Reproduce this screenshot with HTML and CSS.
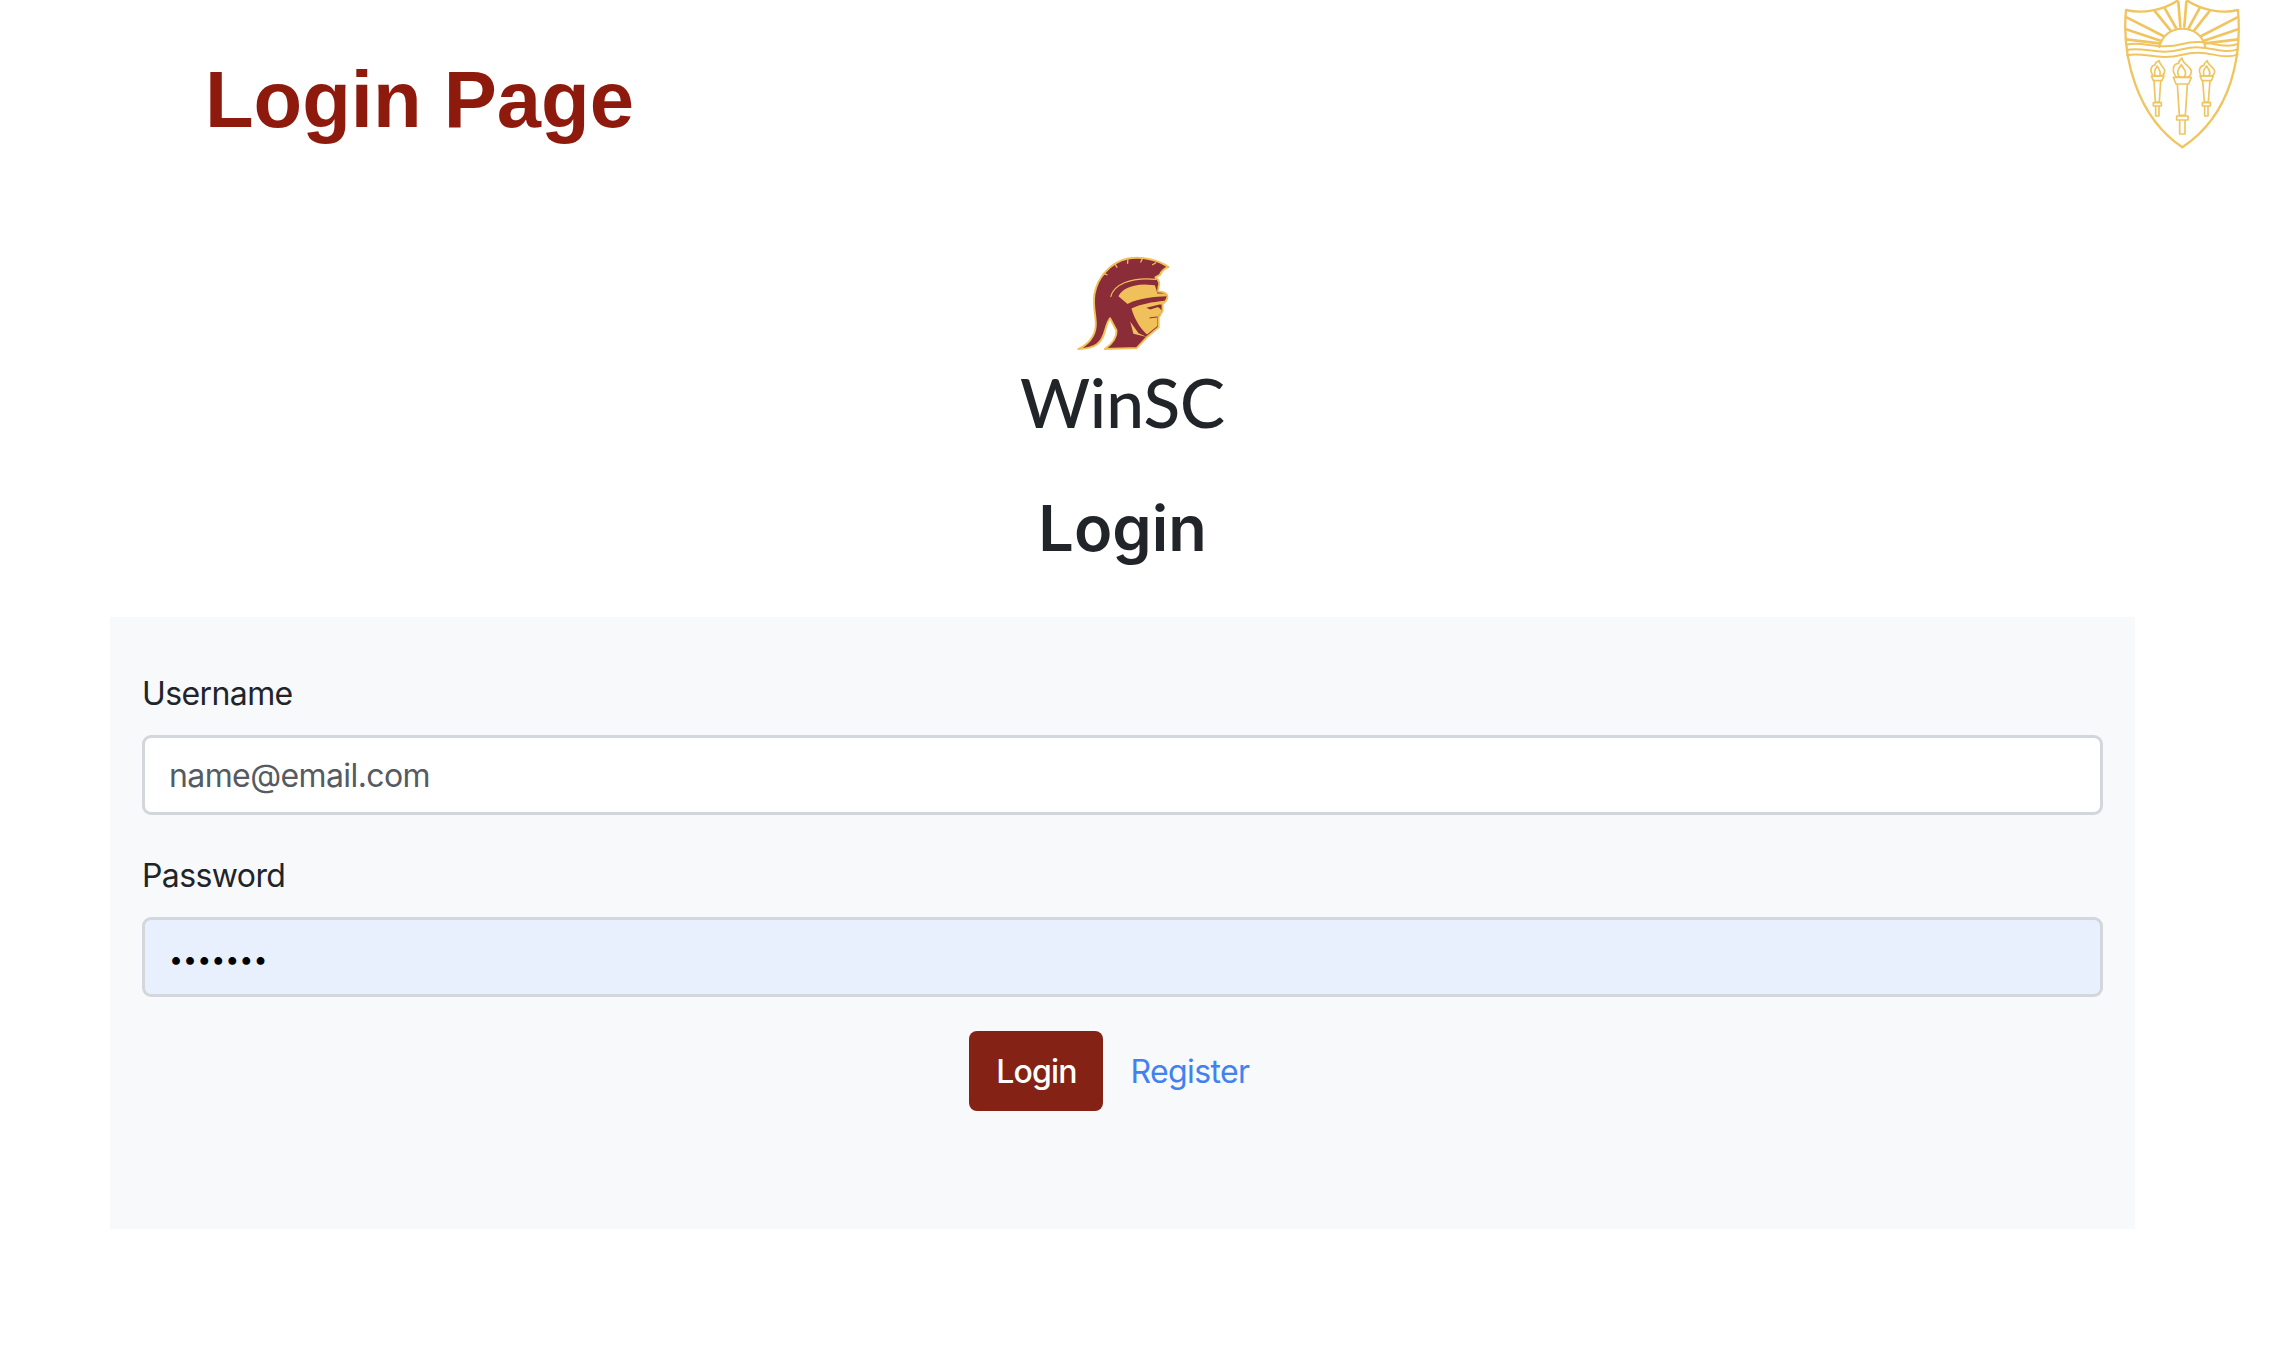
FILE: index.html
```html
<!DOCTYPE html>
<html lang="en">
<head>
    <meta charset="UTF-8">
    <title>Login Page</title>
    <link rel="stylesheet" href="styles.css">
</head>
<body>

    <header class="top">
        <h1 class="page-title">Login Page</h1>
        <svg class="seal" viewBox="0 0 540 480" fill="none" stroke="#f0c560" stroke-linecap="round" stroke-linejoin="round">
            <!-- shield -->
            <path stroke-width="7" d="M232 2 C190 30 130 42 78 30 C65 170 110 350 247 442 C400 340 425 160 414 30 C365 42 305 30 262 2"/>
            <!-- rays -->
            <g stroke-width="8">
                <path d="M80 52 L190 108"/>
                <path d="M78 88 L182 122"/>
                <path d="M78 118 L178 130"/>
                <path d="M412 52 L304 108"/>
                <path d="M414 88 L312 122"/>
                <path d="M414 118 L316 130"/>
                <path d="M165 34 L212 92"/>
                <path d="M195 26 L228 84"/>
                <path d="M235 6 L241 80"/>
                <path d="M259 6 L253 80"/>
                <path d="M298 26 L266 84"/>
                <path d="M328 34 L282 92"/>
            </g>
            <!-- sun -->
            <path stroke-width="6" d="M178 142 C186 105 215 86 247 86 C280 86 308 105 316 142"/>
            <!-- waves -->
            <g stroke-width="6">
                <path d="M79 134 C130 122 175 152 247 132 C320 112 360 150 414 132"/>
                <path d="M80 150 C130 138 175 168 247 148 C320 128 360 166 414 148"/>
                <path d="M81 166 C130 154 175 184 247 164 C320 144 360 182 413 164"/>
            </g>
            <!-- torches -->
            <g stroke-width="5">
                <path d="M160 228 C146 210 155 195 165 195 C165 186 172 186 178 182 C176 192 192 200 194 212 C194 220 190 225 186 228Z"/>
                <path d="M165 225 C160 212 168 205 172 198 C176 208 184 212 180 226"/>
                <path d="M154 228 H192 L186 242 H160Z"/>
                <path d="M162 242 L166 306 H178 L182 242"/>
                <path d="M160 308 H184 V318 H160Z"/>
                <path d="M167 318 V348 H177 V318"/>
                <path d="M228 230 C212 208 222 190 236 190 C236 182 242 178 246 174 C246 190 268 196 274 212 C274 222 270 228 264 232Z"/>
                <path d="M236 228 C228 212 238 204 244 194 C250 208 262 212 254 230"/>
                <path d="M220 232 H274 L266 252 H228Z"/>
                <path d="M232 254 L238 346 H256 L262 254"/>
                <path d="M230 348 H264 V360 H230Z"/>
                <path d="M239 362 V402 H255 V362"/>
                <path d="M304 228 C292 210 302 196 312 196 C312 188 318 186 322 182 C322 194 340 200 344 212 C344 220 340 226 334 228Z"/>
                <path d="M312 225 C306 212 314 206 320 198 C324 208 334 212 328 226"/>
                <path d="M300 228 H340 L334 242 H306Z"/>
                <path d="M308 242 L313 306 H325 L330 242"/>
                <path d="M307 308 H331 V318 H307Z"/>
                <path d="M314 318 V348 H324 V318"/>
            </g>
        </svg>
    </header>

    <main class="content">
        <div class="brand">
            <svg class="trojan" viewBox="222 36 296 302">
                <path fill="#8a2d38" stroke="#f0c05a" stroke-width="6" stroke-linejoin="round" d="M232 329 C262 316 284 290 286 258 C288 228 276 200 282 160 C290 110 330 62 385 50 C430 42 480 55 510 76 C495 82 488 90 484 100 L470 108 C478 114 486 122 480 136 L478 152 C490 152 505 156 507 166 C507 178 500 184 492 190 L492 212 L480 232 L480 262 L446 290 L412 326 L314 329 C332 316 352 298 350 272 L330 234 C312 256 318 296 290 314 C276 324 252 328 232 329Z"/>
                <!-- crest notches -->
                <g stroke="#f0c05a" stroke-width="4">
                    <path d="M308 96 L322 100"/>
                    <path d="M345 66 L352 78"/>
                    <path d="M385 52 L384 66"/>
                    <path d="M430 50 L424 62"/>
                    <path d="M472 62 L460 70"/>
                </g>
                <path fill="none" stroke="#f0c05a" stroke-width="4" d="M332 168 C340 132 390 106 472 114"/>
                <!-- helmet band -->
                <path fill="#f0c05a" d="M356 166 C368 142 396 132 436 130 L468 132 C472 142 474 150 476 158 L500 158 L504 166 C470 168 420 170 384 190Z"/>
                <!-- face -->
                <path fill="#f0c05a" d="M396 204 C425 190 460 184 498 180 L494 190 L470 196 C480 200 488 206 490 212 L476 232 L476 258 L444 284 C428 270 408 244 396 204Z"/>
                <path fill="#8a2d38" d="M442 202 L486 191 L476 200 L454 207Z"/>
                <path stroke="#8a2d38" stroke-width="3" d="M452 233 L476 230"/>
                <path fill="#f0c05a" d="M392 244 L418 280 L444 292 L402 282Z"/>
            </svg>
            <div class="brand-name">WinSC</div>
        </div>

        <h2 class="form-title">Login</h2>

        <form class="login-form">
            <label class="field-label" for="username">Username</label>
            <input class="field" id="username" type="text" placeholder="name@email.com">

            <label class="field-label" for="password">Password</label>
            <input class="field field-filled" id="password" type="password" value="1234567">

            <div class="actions">
                <button class="btn-login" type="button">Login</button>
                <a class="link-register" href="#">Register</a>
            </div>
        </form>
    </main>

</body>
</html>
```

FILE: styles.css
```css
body {
    margin: 0;
    background-color: #fff;
    color: #212529;
    font-family: Inter, "Liberation Sans", sans-serif;
}
.top {
    display: flex;
    justify-content: space-between;
    height: 160px;
}
.page-title {
    margin: 54px 0 0 205px;
    color: #8e1a0e;
    font-family: "Liberation Sans", Arial, sans-serif;
    font-size: 79.6px;
    line-height: 92px;
    font-weight: bold;
}
.seal {
    width: 180px;
    height: 160px;
}
.content {
    width: 2025px;
    margin-left: 110px;
}
.brand {
    display: flex;
    flex-direction: column;
    align-items: center;
    padding-top: 94px;
}
.trojan {
    width: 96px;
    height: 98px;
}
.brand-name {
    margin-top: 6px;
    font-family: Lato, sans-serif;
    font-size: 67.5px;
    font-weight: 500;
    line-height: 88px;
}
.form-title {
    margin: 44px 0 0;
    text-align: center;
    font-size: 63px;
    font-weight: 600;
    line-height: 76px;
}
.login-form {
    display: flex;
    flex-direction: column;
    height: 612px;
    margin-top: 51px;
    padding: 0 32px;
    box-sizing: border-box;
    background-color: #f8f9fa;
}
.field-label {
    margin-top: 56px;
    font-size: 32px;
    letter-spacing: -0.6px;
    line-height: 42px;
}
.field-label + .field {
    margin-top: 20px;
}
.field + .field-label {
    margin-top: 40px;
}
.field {
    height: 80px;
    box-sizing: border-box;
    padding: 0 24px;
    border: 3px solid #d3d6da;
    border-radius: 9px;
    background-color: #fff;
    color: #000;
    font-family: Inter, "Liberation Sans", sans-serif;
    font-size: 32px;
    letter-spacing: -0.6px;
}
.field::placeholder {
    color: #555b62;
    opacity: 1;
}
.field-filled {
    padding-top: 4px;
    background-color: #e8f0fe;
    font-size: 25px;
    letter-spacing: 0;
}
.actions {
    display: flex;
    justify-content: center;
    align-items: center;
    gap: 27px;
    margin-top: 34px;
    padding-right: 26px;
}
.btn-login {
    width: 134px;
    height: 80px;
    border: none;
    border-radius: 8px;
    background-color: #832215;
    color: #fff;
    font-family: Inter, "Liberation Sans", sans-serif;
    font-size: 32px;
    font-weight: 500;
    letter-spacing: -0.8px;
}
.link-register {
    color: #3f82f0;
    font-size: 32px;
    letter-spacing: -0.6px;
    text-decoration: none;
}
```
